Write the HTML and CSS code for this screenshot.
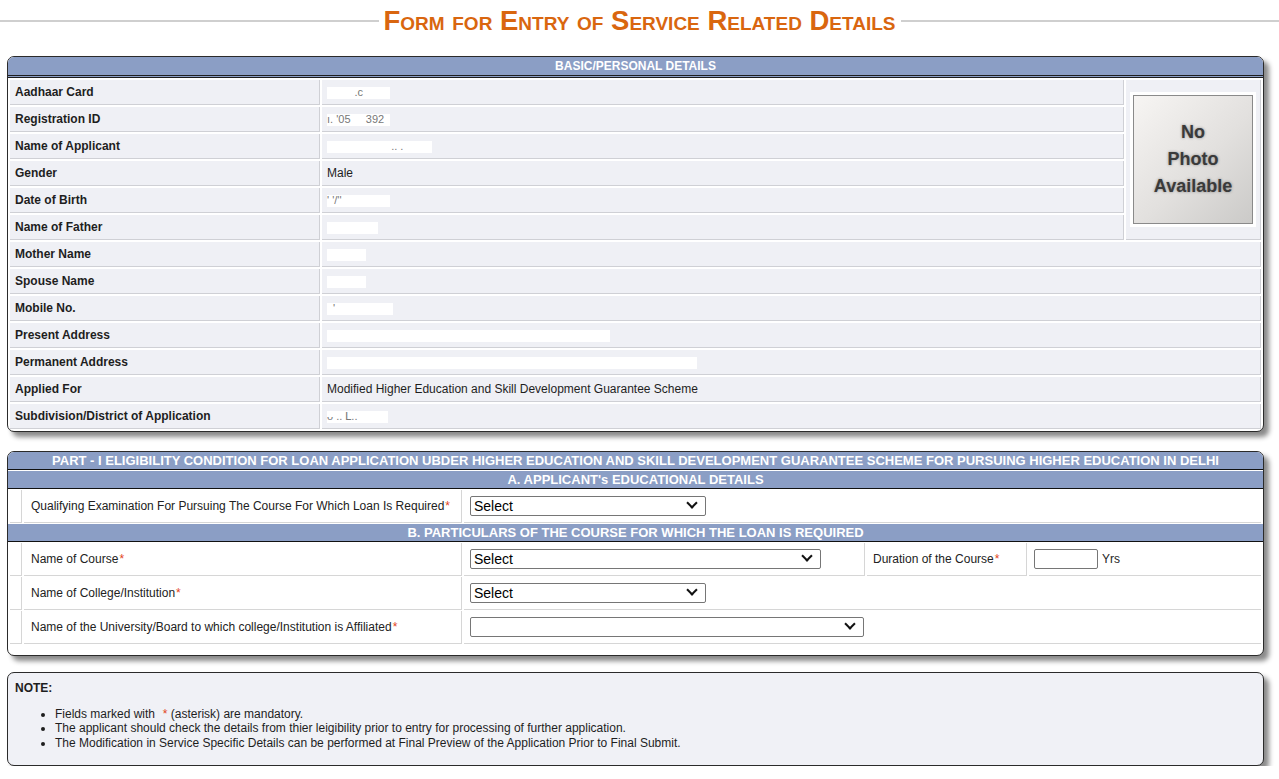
FILE: index.html
```html
<!DOCTYPE html>
<html lang="en">
  <head>
    <meta charset="UTF-8" />
    <title>Form for Entry of Service Related Details</title>
    <link rel="stylesheet" href="styles.css">
  </head>
  <body>
    <div class="page-title"><h1>Form for Entry of Service Related Details</h1></div>

    <div class="panel">
      <div class="bar">BASIC/PERSONAL DETAILS</div>
      <div class="basic">
        <div class="cell lbl">Aadhaar Card</div>
        <div class="cell"><span class="mask w63">&nbsp; &nbsp; &nbsp; &nbsp; &nbsp;.c</span></div>
        <div class="cell photo-cell">
          <div class="photo-frame">
            <div class="photo">No<br>Photo<br>Available</div>
          </div>
        </div>
        <div class="cell lbl">Registration ID</div>
        <div class="cell"><span class="mask w63">ı. '05 &nbsp; &nbsp; 392</span></div>
        <div class="cell lbl">Name of Applicant</div>
        <div class="cell"><span class="mask w105">&nbsp; &nbsp; &nbsp; &nbsp; &nbsp; &nbsp; &nbsp; &nbsp; &nbsp; &nbsp; &nbsp;.. .</span></div>
        <div class="cell lbl">Gender</div>
        <div class="cell">Male</div>
        <div class="cell lbl">Date of Birth</div>
        <div class="cell"><span class="mask w63">' '/'' &nbsp; &nbsp; &nbsp; &nbsp;</span></div>
        <div class="cell lbl">Name of Father</div>
        <div class="cell"><span class="mask w51">&nbsp; &nbsp; &nbsp; &nbsp; &nbsp;</span></div>
        <div class="cell lbl">Mother Name</div>
        <div class="cell wide"><span class="mask w39">&nbsp;</span></div>
        <div class="cell lbl">Spouse Name</div>
        <div class="cell wide"><span class="mask w39">&nbsp;</span></div>
        <div class="cell lbl">Mobile No.</div>
        <div class="cell wide"><span class="mask w66">&nbsp; ' &nbsp;</span></div>
        <div class="cell lbl">Present Address</div>
        <div class="cell wide"><span class="mask w283">&nbsp; &nbsp; &nbsp; &nbsp; &nbsp;</span></div>
        <div class="cell lbl">Permanent Address</div>
        <div class="cell wide"><span class="mask w370">&nbsp; &nbsp; &nbsp; &nbsp; &nbsp; &nbsp; &nbsp; &nbsp; &nbsp;</span></div>
        <div class="cell lbl">Applied For</div>
        <div class="cell wide">Modified Higher Education and Skill Development Guarantee Scheme</div>
        <div class="cell lbl">Subdivision/District of Application</div>
        <div class="cell wide"><span class="mask w61">ᴗ ..  ᒪ..</span></div>
      </div>
    </div>

    <div class="panel panel-form">
      <div class="bar">PART - I ELIGIBILITY CONDITION FOR LOAN APPLICATION UBDER HIGHER EDUCATION AND SKILL DEVELOPMENT GUARANTEE SCHEME FOR PURSUING HIGHER EDUCATION IN DELHI</div>
      <div class="bar sub">A. APPLICANT's EDUCATIONAL DETAILS</div>
      <div class="frow">
        <div class="fcell"></div>
        <div class="fcell flbl">Qualifying Examination For Pursuing The Course For Which Loan Is Required <span class="req">*</span></div>
        <div class="fcell span3">
          <span class="sel-wrap"><select class="sel sel-sm"><option>Select</option></select></span>
        </div>
      </div>
      <div class="bar sub">B. PARTICULARS OF THE COURSE FOR WHICH THE LOAN IS REQUIRED</div>
      <div class="frow">
        <div class="fcell"></div>
        <div class="fcell flbl">Name of Course <span class="req">*</span></div>
        <div class="fcell">
          <span class="sel-wrap"><select class="sel sel-lg"><option>Select</option></select></span>
        </div>
        <div class="fcell flbl dur">Duration of the Course <span class="req">*</span></div>
        <div class="fcell yrs-cell">
          <input type="text" class="yrs"> Yrs
        </div>
      </div>
      <div class="frow">
        <div class="fcell"></div>
        <div class="fcell flbl">Name of College/Institution <span class="req">*</span></div>
        <div class="fcell span3">
          <span class="sel-wrap"><select class="sel sel-sm"><option>Select</option></select></span>
        </div>
      </div>
      <div class="frow">
        <div class="fcell"></div>
        <div class="fcell flbl">Name of the University/Board to which college/Institution is Affiliated <span class="req">*</span></div>
        <div class="fcell span3">
          <span class="sel-wrap"><select class="sel sel-xl"><option></option></select></span>
        </div>
      </div>
    </div>

    <div class="panel note">
      <b>NOTE:</b>
      <ul>
        <li>Fields marked with &nbsp;<span class="req">*</span> (asterisk) are mandatory.</li>
        <li>The applicant should check the details from thier leigibility prior to entry for processing of further application.</li>
        <li>The Modification in Service Specific Details can be performed at Final Preview of the Application Prior to Final Submit.</li>
      </ul>
    </div>
  </body>
</html>
```

FILE: styles.css
```css
body {
  margin: 0;
  font-family: "Liberation Sans", Arial, sans-serif;
  font-size: 12px;
  color: #1e1e1e;
  background: #fff;
}

/* title with the grey rule on both sides */
.page-title {
  display: flex;
  align-items: center;
  gap: 5px;
  height: 42px;
}
.page-title::before,
.page-title::after {
  content: "";
  flex: 1;
  border-top: 2px solid #cfcfcf;
}
.page-title h1 {
  margin: 0;
  font-size: 27.5px;
  font-variant: small-caps;
  font-weight: bold;
  color: #d9660f;
}

.panel {
  margin: 14px 15px 0 7px;
  border: 1px solid #2b2b2b;
  border-radius: 7px;
  background: #fff;
  box-shadow: 5px 5px 5px #8a8a8a;
}

.bar {
  height: 18px;
  line-height: 18px;
  background: #8b9ec5;
  color: #fff;
  font-weight: bold;
  text-align: center;
  border-bottom: 3px double #1e1e1e;
  border-radius: 6px 6px 0 0;
}

/* basic details grid */
.basic {
  display: grid;
  grid-template-columns: 310px 1fr 135px;
  grid-auto-rows: 25px;
  gap: 2px;
  padding: 2px;
}
.cell {
  background: #eff0f5;
  border-right: 1px solid #cfd0d5;
  border-bottom: 1px solid #cfd0d5;
  padding-left: 5px;
  line-height: 24px;
  white-space: nowrap;
}
.lbl {
  font-weight: bold;
}
.wide {
  grid-column: span 2;
}
.photo-cell {
  grid-column: 3;
  grid-row: 1 / span 6;
  padding: 0;
  display: flex;
  align-items: center;
  justify-content: center;
}
.photo-frame {
  background: #fff;
  padding: 3px;
}
.photo {
  width: 118px;
  height: 127px;
  border: 1px solid #8a8a8a;
  background: linear-gradient(135deg, #f7f5f3, #e2e0de 55%, #cbcac8);
  display: flex;
  align-items: center;
  justify-content: center;
  text-align: center;
  font-size: 18px;
  line-height: 27px;
  font-weight: bold;
  color: #3a3a3a;
  text-shadow: 0 0 3px rgba(0, 0, 0, 0.4);
}

/* redacted values */
.mask {
  display: inline-block;
  height: 12px;
  line-height: 10px;
  vertical-align: middle;
  background: #fff;
  color: #777;
  overflow: hidden;
  font-size: 11px;
}
.w39 { width: 39px; }
.w51 { width: 51px; }
.w61 { width: 61px; }
.w63 { width: 63px; }
.w66 { width: 66px; }
.w105 { width: 105px; }
.w283 { width: 283px; }
.w370 { width: 370px; }

/* part I form */
.panel-form {
  margin-top: 19px;
  padding-bottom: 11px;
}
.panel-form .bar {
  height: 17px;
  line-height: 17px;
  font-size: 13px;
  border-bottom: 1px solid #111;
}
.panel-form .sub {
  margin-top: 1px;
  border-radius: 0;
}
.frow {
  display: grid;
  grid-template-columns: 12px 438px 401px 160px 1fr;
  column-gap: 2px;
  padding: 1px 2px 0;
}
.fcell {
  height: 32px;
  border-right: 1px solid #d6d6d6;
  border-bottom: 1px solid #d6d6d6;
  display: flex;
  align-items: center;
  padding-left: 6px;
  white-space: nowrap;
}
.frow .fcell:first-child {
  padding: 0;
}
.frow .fcell:last-child {
  border-right: none;
}
.flbl {
  padding-left: 7px;
  color: #222;
}
.dur {
  padding-left: 6px;
}
.yrs-cell {
  padding-left: 5px;
}
.span3 {
  grid-column: span 3;
}
.req {
  color: #e2451c;
  margin-left: 1px;
}

.sel-wrap {
  position: relative;
  display: inline-block;
  height: 20px;
}
.sel-wrap::after {
  content: "";
  position: absolute;
  right: 10px;
  top: 3px;
  width: 6px;
  height: 6px;
  border-right: 2px solid #111;
  border-bottom: 2px solid #111;
  transform: rotate(45deg);
  pointer-events: none;
}
.sel {
  appearance: none;
  -webkit-appearance: none;
  display: block;
  height: 20px;
  padding: 0 0 0 3px;
  font-family: "Liberation Sans", Arial, sans-serif;
  font-size: 14px;
  color: #000;
  background: #fff;
  border: 1px solid #767676;
  border-radius: 2px;
}
.sel-sm { width: 236px; }
.sel-lg { width: 351px; }
.sel-xl { width: 394px; }
.yrs {
  width: 64px;
  height: 20px;
  box-sizing: border-box;
  border: 1px solid #767676;
  border-radius: 2px;
  margin-right: 4px;
}

/* note */
.note {
  margin-top: 16px;
  background: #f0f1f6;
  padding: 8px 7px 15px;
  line-height: 14.5px;
}
.note ul {
  margin: 11px 0 0;
  padding-left: 40px;
}
```
